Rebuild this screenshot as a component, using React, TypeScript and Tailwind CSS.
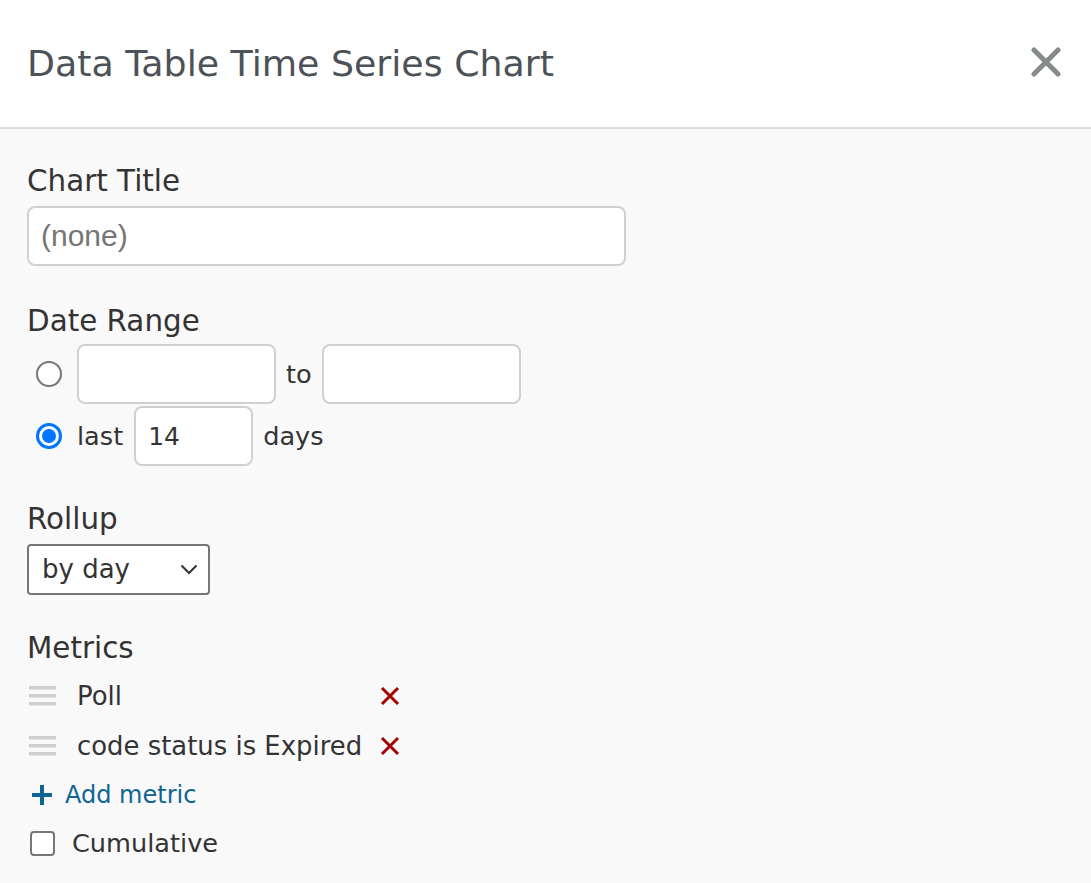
import React from "react";

const F = { fontFamily: '"DejaVu Sans", Verdana, sans-serif' };

function Radio({ checked }: { checked?: boolean }) {
  return checked ? (
    <span className="flex h-[26px] w-[26px] shrink-0 items-center justify-center rounded-full border-[3px] border-[#0075ff] bg-white">
      <span className="h-[14px] w-[14px] rounded-full bg-[#0075ff]" />
    </span>
  ) : (
    <span className="block h-[26px] w-[26px] shrink-0 rounded-full border-2 border-[#767676] bg-white" />
  );
}

function Handle() {
  return (
    <svg width="27" height="22" viewBox="0 0 27 22" className="shrink-0">
      <rect x="0" y="1" width="27" height="3.5" fill="#cfcfcf" />
      <rect x="0" y="9" width="27" height="3.5" fill="#cfcfcf" />
      <rect x="0" y="17" width="27" height="3.5" fill="#cfcfcf" />
    </svg>
  );
}

function RedX() {
  return (
    <svg width="20" height="20" viewBox="0 0 20 20" className="shrink-0">
      <path d="M2 2 L18 18 M18 2 L2 18" stroke="#a30000" strokeWidth="3" />
    </svg>
  );
}

export default function App() {
  return (
    <div className="h-[883px] w-[1091px] overflow-hidden bg-[#f9f9f9] text-[#333]" style={F}>
      <div className="flex h-[129px] items-center justify-between border-b-2 border-[#dcdcdc] bg-white pl-[27px] pr-[30px]">
        <div className="text-[36.3px] leading-[44px] text-[#4d5258]">Data Table Time Series Chart</div>
        <svg width="30" height="30" viewBox="0 0 30 30" className="mb-[3px]">
          <path d="M3 3 L27 27 M27 3 L3 27" stroke="#858a8a" strokeWidth="5" strokeLinecap="round" />
        </svg>
      </div>

      <div className="flex flex-col px-[27px] pt-[34px]">
        <div className="text-[29.4px] leading-[36px]">Chart Title</div>
        <input
          className="mt-[7px] h-[60px] w-[599px] rounded-[8px] border-2 border-[#d0d0d0] bg-white px-[12px] text-[30px] outline-none placeholder:text-[#757575]"
          style={{ fontFamily: '"Liberation Sans", Arial, sans-serif' }}
          placeholder="(none)"
        />

        <div className="mt-[37px] text-[29.4px] leading-[36px]">Date Range</div>
        <div className="mt-[5px] flex h-[60px] items-center">
          <span className="ml-[9px] mr-[15px]"><Radio /></span>
          <input className="h-[60px] w-[199px] rounded-[8px] border-2 border-[#d0d0d0] bg-white outline-none" />
          <span className="mx-[10px] text-[25.6px]">to</span>
          <input className="h-[60px] w-[199px] rounded-[8px] border-2 border-[#d0d0d0] bg-white outline-none" />
        </div>
        <div className="mt-[2px] flex h-[60px] items-center">
          <span className="ml-[9px] mr-[15px]"><Radio checked /></span>
          <span className="text-[25.6px]">last</span>
          <input
            className="ml-[11px] h-[60px] w-[119px] rounded-[8px] border-2 border-[#d0d0d0] bg-white px-[12px] text-[25px] text-[#333] outline-none"
            style={F}
            defaultValue="14"
          />
          <span className="ml-[10px] text-[25.6px]">days</span>
        </div>

        <div className="mt-[35px] text-[29.4px] leading-[36px]">Rollup</div>
        <div className="mt-[7px] flex h-[51px] w-[183px] items-center justify-between rounded-[4px] border-2 border-[#767676] bg-white pl-[13px] pr-[10px]">
          <span className="text-[26px]">by day</span>
          <svg width="18" height="11" viewBox="0 0 18 11">
            <path d="M1.5 1.5 L9 9 L16.5 1.5" stroke="#333" strokeWidth="2" fill="none" />
          </svg>
        </div>

        <div className="mt-[35px] text-[29.4px] leading-[36px]">Metrics</div>
        <div className="mt-[5px] flex h-[50px] items-center">
          <span className="ml-[2px]"><Handle /></span>
          <span className="ml-[21px] w-[303px] text-[25.9px]">Poll</span>
          <RedX />
        </div>
        <div className="flex h-[50px] items-center">
          <span className="ml-[2px]"><Handle /></span>
          <span className="ml-[21px] w-[303px] text-[25.9px]">code status is Expired</span>
          <RedX />
        </div>
        <div className="flex h-[48px] items-center text-[#0e6594]">
          <svg width="22" height="22" viewBox="0 0 22 22" className="ml-[4px]">
            <path d="M11 1 V21 M1 11 H21" stroke="#0e6594" strokeWidth="4" />
          </svg>
          <span className="ml-[12px] text-[24px]">Add metric</span>
        </div>
        <div className="flex h-[48px] items-center">
          <span className="ml-[3px] h-[25px] w-[25px] rounded-[4px] border-2 border-[#767676] bg-white" />
          <span className="ml-[17px] text-[25.6px]">Cumulative</span>
        </div>
      </div>
    </div>
  );
}
